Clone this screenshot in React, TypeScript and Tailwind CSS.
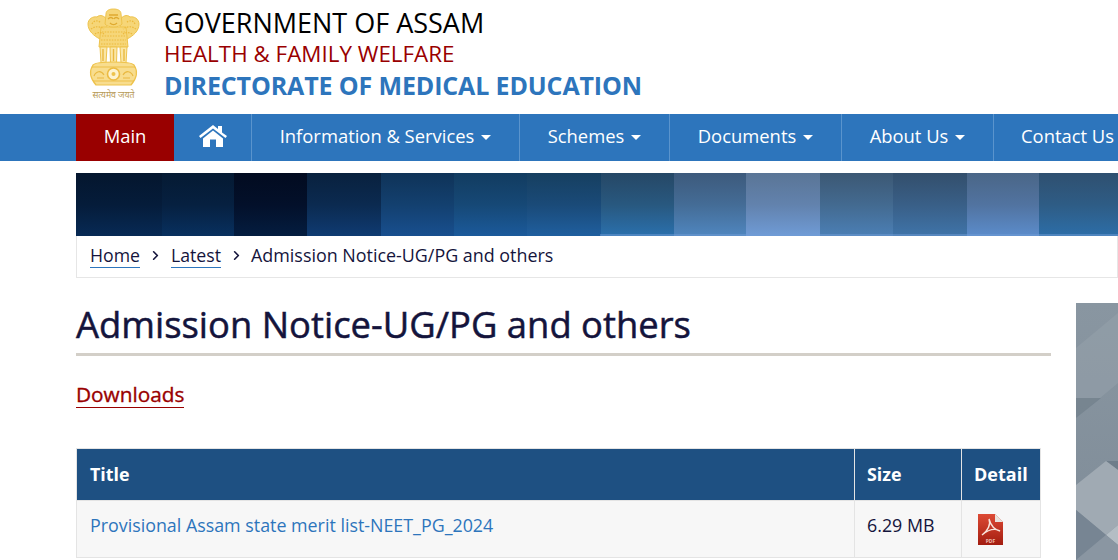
import { ChevronRight } from 'lucide-react';

const navItems = [
  { label: 'Information & Services', w: 'w-[268px]' },
  { label: 'Schemes', w: 'w-[150px]' },
  { label: 'Documents', w: 'w-[172px]' },
  { label: 'About Us', w: 'w-[152px]' },
];

const strips = [
  'w-[86px] bg-gradient-to-b from-[#04162e] via-[#051c3a] to-[#072a55]',
  'w-[72px] bg-gradient-to-b from-[#051a33] via-[#062040] to-[#08305f]',
  'w-[73px] bg-gradient-to-b from-[#020b20] via-[#03102a] to-[#041d40]',
  'w-[74px] bg-gradient-to-b from-[#09213e] via-[#0b2a50] to-[#0f3b72]',
  'w-[73px] bg-gradient-to-b from-[#0f3358] via-[#13406f] to-[#184f8f]',
  'w-[73px] bg-gradient-to-b from-[#123c60] via-[#164876] to-[#1b5a9b]',
  'w-[74px] bg-gradient-to-b from-[#163f60] via-[#1a4a78] to-[#1f5f9f]',
  'w-[73px] bg-gradient-to-b from-[#264866] via-[#28587f] to-[#2a70ad]',
  'w-[72px] bg-gradient-to-b from-[#3d5a7c] via-[#446c96] to-[#4f86bf]',
  'w-[74px] bg-gradient-to-b from-[#5a7596] via-[#6282ad] to-[#6f9bd6]',
  'w-[73px] bg-gradient-to-b from-[#3c5874] via-[#436a90] to-[#4b7fb5]',
  'w-[74px] bg-gradient-to-b from-[#334f6c] via-[#395f87] to-[#3f74a9]',
  'w-[72px] bg-gradient-to-b from-[#4a6687] via-[#5173a0] to-[#5b8ccb]',
  'w-[80px] bg-gradient-to-b from-[#2f5070] via-[#2e5c85] to-[#2c6ea8]',
];

const Emblem = () => (
  <svg width="60" height="96" viewBox="0 0 60 96" className="shrink-0">
    {/* side lions */}
    <g fill="#f6d678" stroke="#eec34c" strokeWidth="1">
      <path d="M3 17 C3 12 8 9 12 10 C15 7 20 9 22 13 L22 33 L15 32 C9 29 3 24 3 17 Z" />
      <path d="M54 17 C54 12 49 9 45 10 C42 7 37 9 35 13 L35 33 L42 32 C48 29 54 24 54 17 Z" />
      <path d="M16 20 H41 L43 40 H14 Z" />
      <path d="M21 7 C21 3 25 2 28.5 2 C32 2 36 3 36 7 L37 17 C34 21 23 21 20 17 Z" />
    </g>
    <g fill="none" stroke="#ecb93c" strokeWidth="1.2" strokeDasharray="1.5 1.2">
      <path d="M7 17 C9 13 13 13 16 16 M6 22 C10 19 15 19 19 22 M10 27 C13 25 17 25 20 28" />
      <path d="M50 17 C48 13 44 13 41 16 M51 22 C47 19 42 19 38 22 M47 27 C44 25 40 25 37 28" />
      <path d="M17 25 H40 M17 29 H40 M16 33 H41 M16 37 H41" />
    </g>
    {/* central face */}
    <path d="M24 8 H33 M23 12 C25 10 27 10 28 12 M29 12 C30 10 32 10 34 12 M25 16 C27 18 30 18 32 16" fill="none" stroke="#dfa92f" strokeWidth="1.3" />
    {/* legs */}
    <g fill="#fae6a6" stroke="#eec34c" strokeWidth="1">
      <path d="M15 40 H22 L21 56 H16 Z" />
      <path d="M25 40 H32 L31.5 56 H25.5 Z" />
      <path d="M35 40 H42 L41 56 H36 Z" />
    </g>
    <path d="M18 42 V54 M28.5 42 V54 M39 42 V54" fill="none" stroke="#e9b840" strokeWidth="1.4" />
    {/* abacus */}
    <path d="M8 58 C12 54 45 54 49 58 C53 64 52 71 46 78 H11 C5 71 4 64 8 58 Z" fill="#f8dd8e" stroke="#eec34c" strokeWidth="1.2" />
    <path d="M7 60 H50 M8 74 H49" stroke="#edbf48" strokeWidth="1" />
    <circle cx="28.5" cy="67" r="6" fill="#fdf3cf" stroke="#ecbb42" strokeWidth="1.6" />
    <circle cx="28.5" cy="67" r="2" fill="#eec34c" />
    <path d="M9 69 C11 64 16 63 19 68 M48 69 C46 64 41 63 38 68 M12 71 H19 M38 71 H45" fill="none" stroke="#e9b840" strokeWidth="1.2" />
    <text x="28.5" y="91" textAnchor="middle" fontSize="10" fill="#b79a56" fontFamily="'Noto Sans', sans-serif" textLength="42" lengthAdjust="spacingAndGlyphs">सत्यमेव जयते</text>
  </svg>
);

const HomeIcon = () => (
  <svg width="28" height="23" viewBox="0 0 28 23">
    <path d="M0 12 L14 1 L19 5 V2 H23 V8.5 L28 12 L26.5 14 L14 4.5 L1.5 14 Z" fill="#fff" />
    <path d="M4 14.5 L14 6.5 L24 14.5 V23 H17 V15.5 H11 V23 H4 Z" fill="#fff" />
  </svg>
);

const PdfIcon = () => (
  <svg width="25" height="31" viewBox="0 0 25 31" className="block">
    <defs>
      <linearGradient id="pdfred" x1="0" y1="0" x2="0" y2="1">
        <stop offset="0" stopColor="#dd4a35" />
        <stop offset="1" stopColor="#a31d10" />
      </linearGradient>
    </defs>
    <path d="M0 0 H17 L25 8 V31 H0 Z" fill="url(#pdfred)" />
    <path d="M17 0 L25 8 H17 Z" fill="#e8e2dc" />
    <path d="M11 5 C13 10 10 17 4 21 C10 16 17 14 22 17 C17 16 13 12 11 5 Z" fill="none" stroke="#f8e4dc" strokeWidth="1.4" />
    <text x="12.5" y="29" textAnchor="middle" fontSize="5" fontWeight="700" fill="#eebbb0" fontFamily="'Open Sans', sans-serif">PDF</text>
  </svg>
);

const SideArt = () => (
  <svg width="42" height="257" viewBox="0 0 42 257" className="block">
    <path d="M0 45 L42 10 V80 L0 115 Z" fill="#9aa5ae" opacity="0.45" />
    <path d="M0 95 H25 L0 115 Z" fill="#6f7d8a" opacity="0.75" />
    <path d="M30 158 H42 V167 Z" fill="#6f7d8a" />
    <path d="M0 182 L30 158 L42 167 V222 L30 232 L0 207 Z" fill="#a0aab3" />
    <path d="M0 207 L30 232 L0 257 Z" fill="#778593" />
    <path d="M30 232 L42 222 V242 Z" fill="#b4bdc4" />
    <path d="M0 257 L30 232 L42 242 V257 Z" fill="#8a96a2" />
  </svg>
);

export default function App() {
  return (
    <div className="w-[1118px] h-[560px] overflow-hidden bg-white font-['Open_Sans',sans-serif]">
      <header className="h-[114px] flex pl-[85px] pt-[7px]">
        <Emblem />
        <div className="ml-[19px]">
          <div className="text-[27px] leading-[32px] text-black">GOVERNMENT OF ASSAM</div>
          <div className="text-[22.4px] leading-[30px] text-[#990000]">HEALTH &amp; FAMILY WELFARE</div>
          <div className="text-[25px] leading-[32px] font-bold tracking-[-0.13px] text-[#2d75bc]">DIRECTORATE OF MEDICAL EDUCATION</div>
        </div>
      </header>

      <nav className="h-[47px] bg-[#2d75bc] flex pl-[76px] text-white text-[18.4px]">
        <div className="w-[98px] pb-[3px] bg-[#990000] flex items-center justify-center">Main</div>
        <div className="w-[78px] pb-[4px] flex items-center justify-center border-r border-[#5a94cd]">
          <HomeIcon />
        </div>
        {navItems.map((item) => (
          <div key={item.label} className={`${item.w} shrink-0 pb-[3px] flex items-center justify-center border-r border-[#5a94cd]`}>
            {item.label}
            <span className="ml-[7px] mt-[3px] border-x-[5px] border-t-[5px] border-x-transparent border-t-white" />
          </div>
        ))}
        <div className="pl-[27px] pb-[3px] flex items-center whitespace-nowrap">Contact Us</div>
      </nav>

      <main className="pl-[76px] pt-[12px]">
        <div className="relative flex h-[63px] w-[1042px]">
          {strips.map((s) => (
            <div key={s} className={`${s} h-full shrink-0`} />
          ))}
          <div className="absolute bottom-0 left-[524px] right-0 h-[2px] bg-[#6f9bd6]/50" />
        </div>
        <div className="h-[42px] w-[1042px] border border-t-0 border-[#e6e6e6] flex items-center pl-[13px] pb-[2px] text-[17.7px] text-[#14143c]">
          <a className="border-b border-[#2d75bc] leading-[24px]">Home</a>
          <ChevronRight size={15} strokeWidth={2.6} className="mx-[8px]" />
          <a className="border-b border-[#2d75bc] leading-[24px]">Latest</a>
          <ChevronRight size={15} strokeWidth={2.6} className="ml-[8px] mr-[7px]" />
          <span className="text-[17.9px]">Admission Notice-UG/PG and others</span>
        </div>

        <div className="flex">
          <div className="w-[975px] shrink-0">
            <h1 className="mt-[23px] text-[36.4px] leading-[46px] [-webkit-text-stroke:0.5px_#14143c] text-[#14143c] pb-[6px] border-b-[3px] border-[#d3cfc8]">
              Admission Notice-UG/PG and others
            </h1>
            <h2 className="mt-[25px] inline-block text-[20.8px] leading-[26px] [-webkit-text-stroke:0.35px_#990000] text-[#990000] border-b border-[#990000]">Downloads</h2>
            <table className="mt-[40px] w-[964px] table-fixed border-collapse text-[17.85px]">
              <colgroup>
                <col className="w-[778px]" />
                <col className="w-[107px]" />
                <col className="w-[79px]" />
              </colgroup>
              <thead>
                <tr className="h-[52px] bg-[#1e5082] text-white font-bold text-left">
                  <th className="border border-[#e4e4e4] pl-[13px]">Title</th>
                  <th className="border border-[#e4e4e4] pl-[12px]">Size</th>
                  <th className="border border-[#e4e4e4] pl-[12px] text-[18px]">Detail</th>
                </tr>
              </thead>
              <tbody>
                <tr className="h-[57px] bg-[#f7f7f7]">
                  <td className="border border-[#e4e4e4] pl-[13px] pb-[7px] text-[#2d75bc]">Provisional Assam state merit list-NEET_PG_2024</td>
                  <td className="border border-[#e4e4e4] pl-[12px] pb-[7px] text-[#14143c]">6.29 MB</td>
                  <td className="border border-[#e4e4e4] pl-[16px]"><PdfIcon /></td>
                </tr>
              </tbody>
            </table>
          </div>
          <aside className="ml-[25px] mt-[25px] w-[42px] h-[257px] shrink-0 bg-gradient-to-b from-[#8996a1] to-[#7f8c98]">
            <SideArt />
          </aside>
        </div>
      </main>
    </div>
  );
}
